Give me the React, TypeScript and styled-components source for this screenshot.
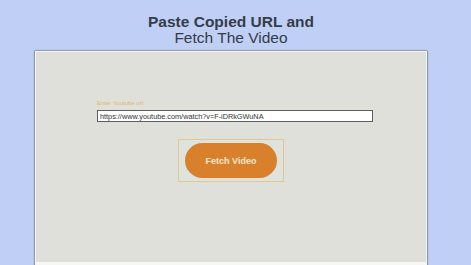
import React from "react";
import styled, { createGlobalStyle } from "styled-components";

const Global = createGlobalStyle`
  html, body { margin: 0; padding: 0; }
  body {
    background: #bfcff5;
    font-family: "Liberation Sans", Arial, sans-serif;
    width: 471px;
    height: 265px;
    overflow: hidden;
  }
`;

const Page = styled.div`
  display: flex;
  flex-direction: column;
  padding-top: 14px;
`;

const Title = styled.h1`
  margin: 0 0 0 35px;
  width: 392px;
  text-align: center;
  font-weight: normal;
  color: #363c47;
  font-size: 15.5px;
  line-height: 16px;
`;

const Strong = styled.span`
  display: block;
  font-weight: bold;
`;

const Panel = styled.div`
  margin-top: 5px;
  margin-left: 35px;
  width: 392px;
  height: 214px;
  box-sizing: border-box;
  background: #dfe0da;
  border: 1px solid #f4f4f0;
  border-bottom: 3px solid #f6f6f4;
  box-shadow: -1px 0 1px #8d97ae, 1px 0 1px #8d97ae, 0 -1px 1px #9aa4ba;
  display: flex;
  flex-direction: column;
  padding-top: 48px;
`;

const Form = styled.div`
  display: flex;
  flex-direction: column;
  padding-left: 61px;
  gap: 3px;
`;

const Label = styled.label`
  font-size: 6px;
  line-height: 7px;
  color: #e2b66c;
`;

const Input = styled.input`
  width: 276px;
  height: 12px;
  box-sizing: border-box;
  border: 1px solid #5a5e68;
  background: #ffffff;
  padding: 0 2px;
  font-family: "Liberation Sans", Arial, sans-serif;
  font-size: 7.3px;
  color: #333;
  outline: none;
`;

const ButtonRow = styled.div`
  display: flex;
  justify-content: center;
  margin-top: 17px;
`;

const ButtonFrame = styled.div`
  width: 106px;
  height: 43px;
  box-sizing: border-box;
  border: 1px solid #e6c68f;
  display: flex;
  align-items: center;
  justify-content: center;
  background: #dfe3dd;
`;

const FetchButton = styled.button`
  width: 92px;
  height: 35px;
  border-radius: 18px;
  border: none;
  background: #d8802b;
  color: #f7e9cf;
  font-family: "Liberation Sans", Arial, sans-serif;
  font-weight: bold;
  font-size: 9px;
  padding: 0;
  cursor: pointer;
`;

export default function App() {
  return (
    <>
      <Global />
      <Page>
        <Title>
          <Strong>Paste Copied URL and</Strong>
          Fetch The Video
        </Title>
        <Panel>
          <Form>
            <Label>Enter Youtube url:</Label>
            <Input readOnly value="https://www.youtube.com/watch?v=F-iDRkGWuNA" />
          </Form>
          <ButtonRow>
            <ButtonFrame>
              <FetchButton>Fetch Video</FetchButton>
            </ButtonFrame>
          </ButtonRow>
        </Panel>
      </Page>
    </>
  );
}
